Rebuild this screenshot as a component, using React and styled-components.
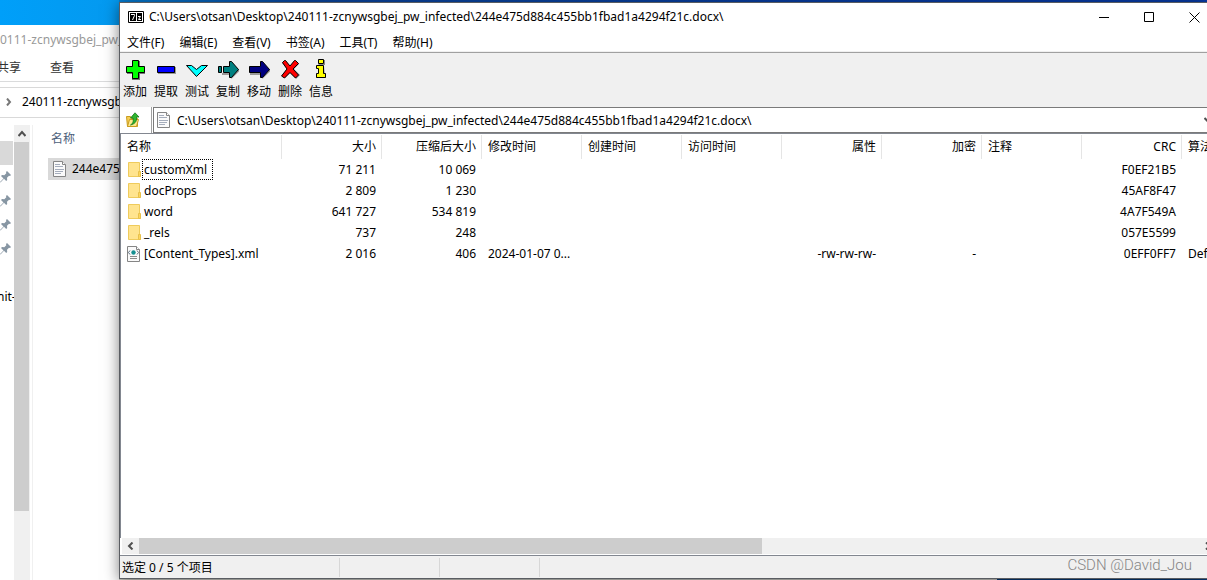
import React from "react";
import styled, { createGlobalStyle } from "styled-components";

const PATH = "C:\\Users\\otsan\\Desktop\\240111-zcnywsgbej_pw_infected\\244e475d884c455bb1fbad1a4294f21c.docx\\";

const menus = ["文件(F)", "编辑(E)", "查看(V)", "书签(A)", "工具(T)", "帮助(H)"];

const columns = [
  { key: "name", label: "名称", width: 161 },
  { key: "size", label: "大小", width: 100, right: true },
  { key: "packed", label: "压缩后大小", width: 100, right: true },
  { key: "modified", label: "修改时间", width: 100 },
  { key: "created", label: "创建时间", width: 100 },
  { key: "accessed", label: "访问时间", width: 100 },
  { key: "attr", label: "属性", width: 100, right: true },
  { key: "encrypted", label: "加密", width: 100, right: true },
  { key: "comment", label: "注释", width: 100 },
  { key: "crc", label: "CRC", width: 100, right: true },
  { key: "method", label: "算法", width: 100 },
];

const files = [
  { name: "customXml", size: "71 211", packed: "10 069", crc: "F0EF21B5", focused: true },
  { name: "docProps", size: "2 809", packed: "1 230", crc: "45AF8F47" },
  { name: "word", size: "641 727", packed: "534 819", crc: "4A7F549A" },
  { name: "_rels", size: "737", packed: "248", crc: "057E5599" },
  {
    name: "[Content_Types].xml",
    size: "2 016",
    packed: "406",
    modified: "2024-01-07 0...",
    attr: "-rw-rw-rw-",
    encrypted: "-",
    crc: "0EFF0FF7",
    method: "Def",
    xml: true,
  },
];

const AddIcon = () => (
  <svg width="24" height="24" viewBox="0 0 24 24">
    <path d="M9 4h8v6h5v7h-5v6H9v-6H4v-7h5z" fill="#777" />
    <path d="M9.500 3.500h6v6h6v6h-6v6h-6v-6h-6v-6h6z" fill="#00ff00" stroke="#000" />
  </svg>
);

const ExtractIcon = () => (
  <svg width="24" height="24" viewBox="0 0 24 24">
    <path d="M4 10h18v7H4z" fill="#999" />
    <path d="M3.500 9.500h17v6h-17z" fill="#0000ff" stroke="#000" />
  </svg>
);

const TestIcon = () => (
  <svg width="24" height="24" viewBox="0 0 24 24">
    <path d="M1.500 8.500h5l5 4 5-4h6l-11 11z" fill="#00ffff" stroke="#000" />
  </svg>
);

const CopyIcon = () => (
  <svg width="24" height="24" viewBox="0 0 24 24">
    <path d="M6 17h8M15 21l7-7v-2" fill="none" stroke="#999" strokeWidth="2" />
    <path d="M2.500 9.500h3v6h-3zM7.500 9.500h6v-5h2l7 8-7 8h-2v-5h-6z" fill="#008080" stroke="#000" />
  </svg>
);

const MoveIcon = () => (
  <svg width="24" height="24" viewBox="0 0 24 24">
    <path d="M3 17h11M15 21l7-7v-2" fill="none" stroke="#999" strokeWidth="2" />
    <path d="M2.500 9.500h11v-5h2l7 8-7 8h-2v-5h-11z" fill="#000080" stroke="#000" />
  </svg>
);

const DeleteIcon = () => (
  <svg width="24" height="24" viewBox="0 0 24 24">
    <path d="M7 4l5 5 5-5 4 3-5 5 6 6-4 4-6-6-5 5-3-3 5-6-5-6z" fill="#888" />
    <path
      d="M4.500 5.500l2-2h1l4.500 5.500 4.500-5.500h1l3 3-5.500 5.500 5.500 6-3 3-5.500-5.500-5.500 5.500-3-2 5.500-7z"
      fill="#ff0000"
      stroke="#000"
    />
  </svg>
);

const InfoIcon = () => (
  <svg width="24" height="24" viewBox="0 0 24 24">
    <path d="M9 7h6v-4h1v5h-6zM15 9v9h2v3H7v-1h9z" fill="#888" />
    <path d="M9.500 2.500h5v4h-5zM7.500 8.500h7v8h2v4h-9v-4h2v-5h-2z" fill="#ffff00" stroke="#000" />
  </svg>
);

const tools = [
  { label: "添加", icon: <AddIcon /> },
  { label: "提取", icon: <ExtractIcon /> },
  { label: "测试", icon: <TestIcon /> },
  { label: "复制", icon: <CopyIcon /> },
  { label: "移动", icon: <MoveIcon /> },
  { label: "删除", icon: <DeleteIcon /> },
  { label: "信息", icon: <InfoIcon /> },
];

const SevenZipIcon = () => (
  <svg width="16" height="12" viewBox="0 0 16 12">
    <path d="M.5.5h15v11H.5z" fill="#fff" stroke="#000" />
    <path d="M2 2h6v8H2zM9 2h5v8H9z" fill="#000" />
    <path d="M3 3.500h3.500v1L4.500 9M10 5.500h2.500L10.500 8.500H13" fill="none" stroke="#fff" />
  </svg>
);

const PageIcon = ({ xml }) => (
  <svg width="16" height="16" viewBox="0 0 16 16">
    <path d="M1.500.5h9l3 3v12h-12z" fill="#fafafa" stroke="#858585" />
    <path d="M10.500.5v3h3" fill="#fff" stroke="#858585" />
    {xml ? (
      <g>
        <path d="M4 4.500L2.500 6.500 4 8.500M11 4.500l1.500 2-1.500 2" fill="none" stroke="#5c6f80" />
        <circle cx="7.500" cy="6.500" r="2.200" fill="#168f91" />
        <path d="M4 10.500h7M4 12.500h7" stroke="#8a8a8a" />
      </g>
    ) : (
      <path d="M3 3.500h5M3 5.500h8M3 8.500h9M3 10.500h8M3 12.500h6" stroke="#a5adbc" />
    )}
  </svg>
);

const FolderIcon = () => (
  <svg width="16" height="16" viewBox="0 0 16 16">
    <path d="M2.500.5h11v10h1v4h-12z" fill="#ffe48f" stroke="#efcb5c" />
    <path d="M12.500 9.500h2v5h-2z" fill="#ffd65c" stroke="#e8c14c" />
  </svg>
);

const UpIcon = () => (
  <svg width="16" height="16" viewBox="0 0 16 16">
    <path d="M1.500 4.500h4l1 2h6v8h-10z" fill="#f5cf55" stroke="#c99b1e" />
    <path d="M2.500 14.500l2-7h9l-2 7z" fill="#ffe98d" stroke="#c99b1e" />
    <path d="M5.500 13c3-2 3-4 2.500-7H5.500L10 .8 14 5h-2.500c.5 5-2 7-6 8z" fill="#2fb52f" stroke="#14781a" strokeWidth=".8" />
  </svg>
);

const PinIcon = () => (
  <svg width="12" height="12" viewBox="0 0 12 12">
    <path d="M7 0l4 4-1 1-1-.2-2 2 .2 2.200-1 1L4 7.800.5 11.500 0 11l3.500-3.500L1 5l1-1 2.300.3 2-2L6 1z" fill="#8796a3" />
  </svg>
);

const Chevron = ({ d, color = "#505050" }) => (
  <svg width="8" height="8" viewBox="0 0 8 8">
    <path d={d} fill="none" stroke={color} strokeWidth="2" />
  </svg>
);

const App = () => {
  return (
    <Desktop>
      <GlobalStyle />
      <Explorer>
        <Wallpaper />
        <ExplorerTitle>0111-zcnywsgbej_pw_</ExplorerTitle>
        <Ribbon>
          <RibbonTab>共享</RibbonTab>
          <RibbonTab>查看</RibbonTab>
        </Ribbon>
        <Breadcrumb>
          <Chevron d="M2 0.500L5 4 2 7.500" color="#777" />
          <span>240111-zcnywsgb</span>
        </Breadcrumb>
        <ExplorerBody>
          <QuickAccess>
            <Selected />
            {[1, 2, 3, 4].map((n) => (
              <Pin key={n}>
                <PinIcon />
              </Pin>
            ))}
            <Folder>nit-</Folder>
          </QuickAccess>
          <SideScroll>
            <ScrollButton aria-label="up" $width={15}>
              <Chevron d="M0.500 6L4 2l3.500 4" />
            </ScrollButton>
            <SideThumb />
          </SideScroll>
          <ExplorerFiles>
            <ExplorerHead>名称</ExplorerHead>
            <ExplorerFile>
              <PageIcon />
              <span>244e475</span>
            </ExplorerFile>
          </ExplorerFiles>
        </ExplorerBody>
      </Explorer>

      <Main>
        <Archive>
          <TitleBar>
            <SevenZipIcon />
            <Title>{PATH}</Title>
            <WindowButton aria-label="minimize">
              <svg width="11" height="11">
                <path d="M0 5.500h10" stroke="#000" />
              </svg>
            </WindowButton>
            <WindowButton aria-label="maximize">
              <svg width="11" height="11">
                <path d="M.5.5h9v9h-9z" fill="none" stroke="#000" />
              </svg>
            </WindowButton>
            <WindowButton aria-label="close">
              <svg width="11" height="11">
                <path d="M.5.5l10 10M10.500.5l-10 10" stroke="#000" />
              </svg>
            </WindowButton>
          </TitleBar>
          <MenuBar>
            {menus.map((label) => (
              <MenuButton key={label}>{label}</MenuButton>
            ))}
          </MenuBar>
          <Toolbar>
            {tools.map((tool) => (
              <ToolButton key={tool.label}>
                {tool.icon}
                {tool.label}
              </ToolButton>
            ))}
          </Toolbar>
          <AddressRow>
            <UpButton aria-label="up one level">
              <UpIcon />
            </UpButton>
            <AddressBox>
              <PageIcon />
              <AddressInput aria-label="path" defaultValue={PATH} />
              <Chevron d="M0.500 2L4 5.500 7.500 2" />
            </AddressBox>
          </AddressRow>
          <ListView>
            <Table>
              <colgroup>
                {columns.map((c) => (
                  <Col key={c.key} $width={c.width} />
                ))}
              </colgroup>
              <thead>
                <tr>
                  {columns.map((c) => (
                    <HeadCell key={c.key} $right={c.right}>
                      <HeadLabel>{c.label}</HeadLabel>
                    </HeadCell>
                  ))}
                </tr>
              </thead>
              <tbody>
                {files.map((file) => (
                  <tr key={file.name}>
                    {columns.map((c) =>
                      c.key === "name" ? (
                        <NameCell key={c.key}>
                          <NameWrap>
                            {file.xml ? <PageIcon xml /> : <FolderIcon />}
                            <FileName $focused={file.focused}>{file.name}</FileName>
                          </NameWrap>
                        </NameCell>
                      ) : (
                        <Cell key={c.key} $right={c.right}>
                          {file[c.key]}
                        </Cell>
                      )
                    )}
                  </tr>
                ))}
              </tbody>
            </Table>
          </ListView>
          <BottomScroll>
            <ScrollButton aria-label="left" $width={17}>
              <Chevron d="M5.500 0.500L2 4l3.500 3.500" />
            </ScrollButton>
            <BottomThumb />
            <ScrollEnd>
              <Chevron d="M2 0.500L6 4 2 7.500" />
            </ScrollEnd>
          </BottomScroll>
          <StatusBar>
            <StatusCell $width={220}>选定 0 / 5 个项目</StatusCell>
            <StatusCell $width={100} />
            <StatusCell $width={100} />
            <Watermark>CSDN @David_Jou</Watermark>
          </StatusBar>
        </Archive>
      </Main>
    </Desktop>
  );
};

const GlobalStyle = createGlobalStyle`
* {
    box-sizing: border-box;
}
body {
    margin: 0;
    overflow: hidden;
    color: #000;
    font-family: "Noto Sans", "Noto Sans CJK SC", sans-serif;
    font-size: 12px;
    line-height: 20px;
}
button, input {
    margin: 0;
    padding: 0;
    border: 0;
    background: none;
    color: inherit;
    font: inherit;
}
svg {
    display: block;
    flex: none;
}
`;

const Desktop = styled.div`
  display: flex;
  height: 100vh;
  overflow: hidden;
  background: linear-gradient(to right, #00a2f8 0, #0a47a0 300px, #063ba8 1000px);
`;

const Explorer = styled.section`
  flex: none;
  display: flex;
  flex-direction: column;
  width: 119px;
  overflow: hidden;
  background: #fff;
  white-space: nowrap;
`;

const Wallpaper = styled.div`
  height: 25px;
  flex: none;
  background: linear-gradient(to right, #009ff9, #0499ef);
`;

const ExplorerTitle = styled.div`
  height: 30px;
  line-height: 30px;
  color: #999;
`;

const Ribbon = styled.div`
  display: flex;
  align-items: flex-start;
  gap: 29px;
  height: 27px;
  margin-left: -3px;
  border-bottom: 1px solid #dadbdc;
`;

const RibbonTab = styled.button`
  color: #333;
  line-height: 26px;
`;

const Breadcrumb = styled.div`
  display: flex;
  align-items: center;
  gap: 9px;
  height: 31px;
  margin-top: 5px;
  padding-left: 5px;
  padding-bottom: 2px;
  border-top: 1px solid #d9d9d9;
  border-bottom: 1px solid #d9d9d9;
`;

const ExplorerBody = styled.div`
  display: flex;
  flex: 1;
  padding-top: 7px;
`;

const QuickAccess = styled.div`
  flex: none;
  width: 14px;
  overflow: hidden;
  padding-top: 16px;
`;

const Selected = styled.div`
  width: 13px;
  height: 24px;
  background: #d9d9d9;
`;

const Pin = styled.div`
  display: flex;
  align-items: center;
  height: 24px;
`;

const Folder = styled.div`
  margin-top: 24px;
  margin-left: -3px;
  line-height: 24px;
`;

const SideScroll = styled.div`
  flex: none;
  width: 16px;
  background: #f0f0f0;
`;

const ScrollButton = styled.button`
  flex: none;
  display: flex;
  align-items: center;
  justify-content: center;
  width: ${(p) => p.$width}px;
  height: 17px;
`;

const SideThumb = styled.div`
  width: 15px;
  height: 369px;
  background: #cdcdcd;
`;

const ExplorerFiles = styled.div`
  flex: 1;
  min-width: 0;
  margin-left: 2px;
  border-left: 1px solid #f0f0f0;
`;

const ExplorerHead = styled.div`
  height: 33px;
  padding-left: 18px;
  line-height: 28px;
  color: #4c607a;
`;

const ExplorerFile = styled.div`
  display: flex;
  align-items: center;
  gap: 4px;
  height: 22px;
  margin-left: 15px;
  padding-left: 4px;
  background: #d9d9d9;
`;

const Main = styled.main`
  flex: 1;
  min-width: 0;
  display: flex;
  flex-direction: column;
  padding-top: 2px;
  padding-bottom: 1px;
  background: linear-gradient(to right, #d4d4cc 878px, #063a7a 878px) bottom / 100% 1px no-repeat;
`;

const Archive = styled.section`
  flex: 1;
  min-height: 0;
  display: flex;
  flex-direction: column;
  background: #fff;
  border: 1px solid #5a5d62;
  border-right: 0;
  box-shadow: 0 2px 14px rgba(0, 0, 0, 0.5);
`;

const TitleBar = styled.header`
  display: flex;
  align-items: center;
  height: 28px;
  padding-left: 8px;
`;

const Title = styled.div`
  flex: 1;
  min-width: 0;
  padding-left: 5px;
  overflow: hidden;
  line-height: 22px;
  white-space: nowrap;
`;

const WindowButton = styled.button`
  display: flex;
  align-items: center;
  justify-content: center;
  width: 45px;
  height: 28px;
  &:last-child {
    margin-right: -10px;
  }
`;

const MenuBar = styled.nav`
  display: flex;
  align-items: flex-start;
  gap: 15px;
  height: 21px;
  padding-left: 7px;
  border-bottom: 1px solid #f0f0f0;
`;

const MenuButton = styled.button`
  line-height: 24px;
  white-space: nowrap;
`;

const Toolbar = styled.div`
  display: flex;
  align-items: flex-start;
  height: 55px;
  padding-top: 4px;
  background: #f0f0f0;
  border-top: 1px solid #a0a0a0;
`;

const ToolButton = styled.button`
  display: flex;
  flex-direction: column;
  align-items: center;
  width: 31px;
  padding-right: 1px;
  line-height: 22px;
`;

const AddressRow = styled.div`
  display: flex;
  height: 26px;
`;

const UpButton = styled.button`
  width: 32px;
  padding-left: 5px;
  border-right: 1px solid #a0a0a0;
`;

const AddressBox = styled.div`
  flex: 1;
  display: flex;
  align-items: center;
  gap: 5px;
  margin-left: 1px;
  margin-right: -6px;
  padding-left: 2px;
  border: 1px solid #7a7a7a;
`;

const AddressInput = styled.input`
  flex: 1;
  min-width: 0;
  height: 22px;
  padding-top: 1px;
  outline: none;
`;

const ListView = styled.div`
  flex: 1;
  min-height: 0;
  overflow: hidden;
  border-top: 1px solid #828790;
  border-left: 1px solid #828790;
`;

const Table = styled.table`
  width: 1161px;
  table-layout: fixed;
  border-collapse: collapse;
`;

const Col = styled.col`
  width: ${(p) => p.$width}px;
`;

const HeadCell = styled.th`
  height: 25px;
  padding: 1px 0 0;
  font-weight: 400;
  text-align: ${(p) => (p.$right ? "right" : "left")};
`;

const HeadLabel = styled.div`
  height: 24px;
  padding: 0 5px 0 6px;
  border-right: 1px solid #e5e5e5;
  line-height: 24px;
`;

const Cell = styled.td`
  height: 21px;
  padding: 0 6px;
  text-align: ${(p) => (p.$right ? "right" : "left")};
  white-space: nowrap;
`;

const NameCell = styled(Cell)`
  padding: 0 0 0 5px;
`;

const NameWrap = styled.div`
  display: flex;
  align-items: center;
  height: 21px;
`;

const FileName = styled.span`
  padding: 0 5px 0 1px;
  border: 1px dotted ${(p) => (p.$focused ? "#000" : "transparent")};
  line-height: 19px;
`;

const BottomScroll = styled.div`
  display: flex;
  align-items: center;
  height: 16px;
  margin-left: 2px;
  margin-bottom: 1px;
  background: #f0f0f0;
`;

const BottomThumb = styled.div`
  width: 57.4%;
  height: 16px;
  background: #cdcdcd;
`;

const ScrollEnd = styled.div`
  margin-left: auto;
  margin-right: -5px;
`;

const StatusBar = styled.footer`
  display: flex;
  height: 23px;
  padding-top: 2px;
  background: #f0f0f0;
  border-top: 1px solid #828790;
`;

const StatusCell = styled.div`
  width: ${(p) => p.$width}px;
  height: 19px;
  padding-left: 2px;
  border-right: 1px solid #d7d7d7;
`;

const Watermark = styled.div`
  margin-left: auto;
  padding-right: 15px;
  color: #858585;
  font-family: Roboto, sans-serif;
  font-size: 15px;
  font-weight: 300;
  line-height: 14px;
`;

export default App;
